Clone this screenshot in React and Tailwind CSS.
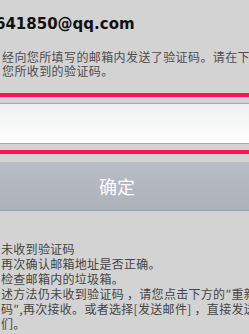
export default function App() {
  return (
    <div className="w-[249px] h-[334px] overflow-hidden bg-[#d3d3d3] font-['Noto_Sans_CJK_SC',sans-serif]">
      <div className="pt-[14px] -ml-[5px] whitespace-nowrap font-['DejaVu_Sans',sans-serif] text-[15px] leading-[20px] font-bold text-[#111]">
        641850@qq.com
      </div>

      <div className="mt-[16px] pl-[2px] whitespace-nowrap text-[12px] leading-[14px] tracking-[0.4px] text-[#4d4d4d]">
        <p>经向您所填写的邮箱内发送了验证码。请在下面</p>
        <p>您所收到的验证码。</p>
      </div>

      <div className="mt-[15px] border-y-4 border-[#fe1256] py-[6px]">
        <div className="h-[41px] border-y border-[#a9a9a9] bg-gradient-to-b from-[#eeeff0] to-white" />
      </div>

      <button className="mt-[8px] w-full h-[49px] border-b border-[#9aa0a8] bg-gradient-to-b from-[#b8bdc5] to-[#adb2bb] pr-[15px] text-[18px] text-white">
        确定
      </button>

      <div className="mt-[30px] pl-[1px] whitespace-nowrap text-[12px] leading-[15px] tracking-[0.3px] text-[#454545]">
        <p>未收到验证码</p>
        <p>再次确认邮箱地址是否正确。</p>
        <p>检查邮箱内的垃圾箱。</p>
        <p>述方法仍未收到验证码 ，请您点击下方的″重新</p>
        <p>码″,再次接收。或者选择[发送邮件] ，直接发送</p>
        <p>们。</p>
      </div>
    </div>
  );
}
